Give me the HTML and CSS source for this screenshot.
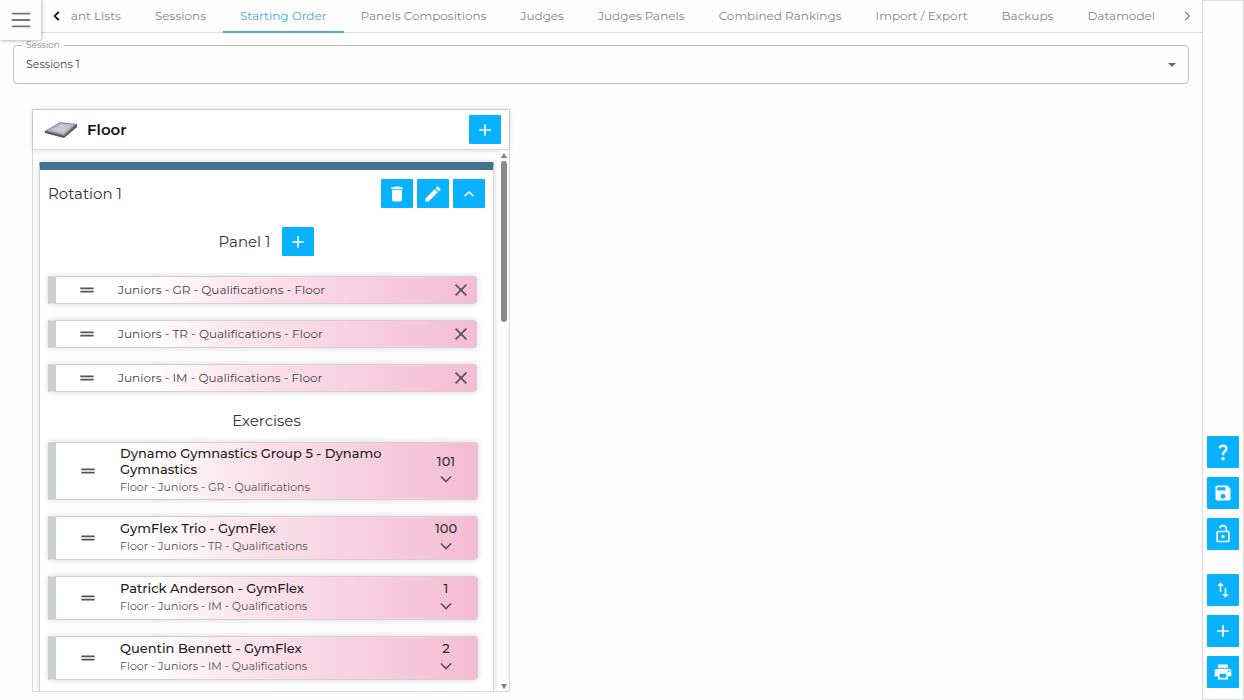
FILE: index.html
```html
<!DOCTYPE html>
<html lang="en">
	<head>
		<meta charset="utf-8">
		<title>Starting Order</title>
		<link rel="stylesheet" href="styles.css">
	</head>
	<body>
		<button class="menuButton" aria-label="Menu">
			<svg viewBox="0 0 24 24"><path d="M2 5h20M2 12h20M2 19h20"/></svg>
		</button>
		<main class="page">
			<nav class="tabBar">
				<button class="tabArrow prev" aria-label="Previous tabs"><svg viewBox="0 0 24 24"><path d="M15 5l-7 7 7 7"/></svg></button>
				<div class="tabs">
					<a class="tab" href="#">Participant Lists</a>
					<a class="tab" href="#">Sessions</a>
					<a class="tab active" href="#">Starting Order</a>
					<a class="tab" href="#">Panels Compositions</a>
					<a class="tab" href="#">Judges</a>
					<a class="tab" href="#">Judges Panels</a>
					<a class="tab" href="#">Combined Rankings</a>
					<a class="tab" href="#">Import / Export</a>
					<a class="tab" href="#">Backups</a>
					<a class="tab" href="#">Datamodel</a>
				</div>
				<button class="tabArrow" aria-label="Next tabs"><svg viewBox="0 0 24 24"><path d="M9 5l7 7-7 7"/></svg></button>
			</nav>

			<fieldset class="sessionField">
				<legend><label for="session">Session</label></legend>
				<select id="session">
					<option>Sessions 1</option>
				</select>
				<svg class="caret" viewBox="0 0 10 5"><path d="M0 0h10L5 5z"/></svg>
			</fieldset>

			<section class="apparatus">
				<header class="apparatusHeader">
					<svg class="floorIcon" viewBox="0 0 32 16">
						<path d="M0 9v2l19 5 13-11V2z" fill="#55565e"/>
						<path d="M0 9L15 0l17 2-13 12z" fill="#8b8d99"/>
						<path d="M3 8.600L15.500 1.300l13.500 1.500-10.500 9.500z" fill="#c6c9da"/>
						<path d="M5 8.400L16 2.200l11 1.200-9 7.800z" fill="none" stroke="#9a9dad" stroke-width=".7" stroke-dasharray="2 1"/>
					</svg>
					<h2>Floor</h2>
					<button class="iconButton" aria-label="Add rotation"><svg viewBox="0 0 24 24"><path d="M19 13h-6v6h-2v-6H5v-2h6V5h2v6h6z"/></svg></button>
				</header>
				<div class="apparatusBody">
					<div class="scrollArea">
						<div class="rotation">
							<div class="rotationHeader">
								<h3>Rotation 1</h3>
								<button class="iconButton" aria-label="Delete"><svg viewBox="0 0 24 24"><path d="M19 4h-3.500l-1-1h-5l-1 1H5v2h14M6 19a2 2 0 0 0 2 2h8a2 2 0 0 0 2-2V7H6z"/></svg></button>
								<button class="iconButton" aria-label="Edit"><svg viewBox="0 0 24 24"><path d="M20.710 7.040c.39-.39.39-1.040 0-1.410l-2.340-2.340c-.37-.39-1.020-.39-1.410 0l-1.840 1.830 3.750 3.750M3 17.250V21h3.750L17.810 9.930l-3.750-3.750z"/></svg></button>
								<button class="iconButton" aria-label="Collapse"><svg viewBox="0 0 24 24"><path d="M7.410 15.410L12 10.830l4.590 4.580L18 14l-6-6-6 6z"/></svg></button>
							</div>
							<div class="panelHeader">
								<h3>Panel 1</h3>
								<button class="iconButton" aria-label="Add phase"><svg viewBox="0 0 24 24"><path d="M19 13h-6v6h-2v-6H5v-2h6V5h2v6h6z"/></svg></button>
							</div>
							<ul class="phases">
								<li class="phase">
									<svg class="handle" viewBox="0 0 24 24"><path d="M20 9H4v2h16zM4 15h16v-2H4z"/></svg>
									<span class="phaseName">Juniors - GR - Qualifications - Floor</span>
									<button class="closeButton" aria-label="Remove"><svg viewBox="0 0 24 24"><path d="M5.500 5.500l13 13M18.500 5.500l-13 13"/></svg></button>
								</li>
								<li class="phase">
									<svg class="handle" viewBox="0 0 24 24"><path d="M20 9H4v2h16zM4 15h16v-2H4z"/></svg>
									<span class="phaseName">Juniors - TR - Qualifications - Floor</span>
									<button class="closeButton" aria-label="Remove"><svg viewBox="0 0 24 24"><path d="M5.500 5.500l13 13M18.500 5.500l-13 13"/></svg></button>
								</li>
								<li class="phase">
									<svg class="handle" viewBox="0 0 24 24"><path d="M20 9H4v2h16zM4 15h16v-2H4z"/></svg>
									<span class="phaseName">Juniors - IM - Qualifications - Floor</span>
									<button class="closeButton" aria-label="Remove"><svg viewBox="0 0 24 24"><path d="M5.500 5.500l13 13M18.500 5.500l-13 13"/></svg></button>
								</li>
							</ul>
							<h3 class="exercisesTitle">Exercises</h3>
							<ul class="exercises">
								<li class="exercise">
									<svg class="handle" viewBox="0 0 24 24"><path d="M20 9H4v2h16zM4 15h16v-2H4z"/></svg>
									<div class="exerciseText">
										<div class="exerciseName">Dynamo Gymnastics Group 5 - Dynamo Gymnastics</div>
										<div class="exerciseInfo">Floor - Juniors - GR - Qualifications</div>
									</div>
									<div class="exerciseSide">
										<span>101</span>
										<button aria-label="Expand"><svg viewBox="0 0 24 24"><path d="M6 9l6 6 6-6"/></svg></button>
									</div>
								</li>
								<li class="exercise">
									<svg class="handle" viewBox="0 0 24 24"><path d="M20 9H4v2h16zM4 15h16v-2H4z"/></svg>
									<div class="exerciseText">
										<div class="exerciseName">GymFlex Trio - GymFlex</div>
										<div class="exerciseInfo">Floor - Juniors - TR - Qualifications</div>
									</div>
									<div class="exerciseSide">
										<span>100</span>
										<button aria-label="Expand"><svg viewBox="0 0 24 24"><path d="M6 9l6 6 6-6"/></svg></button>
									</div>
								</li>
								<li class="exercise">
									<svg class="handle" viewBox="0 0 24 24"><path d="M20 9H4v2h16zM4 15h16v-2H4z"/></svg>
									<div class="exerciseText">
										<div class="exerciseName">Patrick Anderson - GymFlex</div>
										<div class="exerciseInfo">Floor - Juniors - IM - Qualifications</div>
									</div>
									<div class="exerciseSide">
										<span>1</span>
										<button aria-label="Expand"><svg viewBox="0 0 24 24"><path d="M6 9l6 6 6-6"/></svg></button>
									</div>
								</li>
								<li class="exercise">
									<svg class="handle" viewBox="0 0 24 24"><path d="M20 9H4v2h16zM4 15h16v-2H4z"/></svg>
									<div class="exerciseText">
										<div class="exerciseName">Quentin Bennett - GymFlex</div>
										<div class="exerciseInfo">Floor - Juniors - IM - Qualifications</div>
									</div>
									<div class="exerciseSide">
										<span>2</span>
										<button aria-label="Expand"><svg viewBox="0 0 24 24"><path d="M6 9l6 6 6-6"/></svg></button>
									</div>
								</li>
							</ul>
						</div>
					</div>
					<div class="scrollbar" aria-hidden="true">
						<svg viewBox="0 0 6 5"><path d="M3 0l3 5H0z"/></svg>
						<div class="track"><div class="thumb"></div></div>
						<svg viewBox="0 0 6 5"><path d="M0 0h6L3 5z"/></svg>
					</div>
				</div>
			</section>
		</main>

		<aside class="toolbar">
			<div class="toolGroup">
				<button class="iconButton tool" aria-label="Help"><svg viewBox="0 0 24 24"><path d="M11.070 12.850c.77-1.390 2.250-2.210 3.110-3.440.91-1.290.4-3.700-2.180-3.700-1.690 0-2.520 1.280-2.870 2.340L6.540 6.960C7.250 4.830 9.180 3 11.990 3c2.350 0 3.960 1.070 4.780 2.410.7 1.150 1.110 3.300.03 4.900-1.200 1.770-2.350 2.310-2.970 3.450-.25.46-.35.76-.35 2.240h-2.890c-.01-.78-.13-2.050.48-3.150zM14 20c0 1.100-.9 2-2 2s-2-.9-2-2 .9-2 2-2 2 .9 2 2z"/></svg></button>
				<button class="iconButton tool" aria-label="Save"><svg viewBox="0 0 24 24"><path d="M17 3H5c-1.110 0-2 .9-2 2v14c0 1.100.89 2 2 2h14c1.100 0 2-.9 2-2V7l-4-4zm-5 16c-1.660 0-3-1.340-3-3s1.340-3 3-3 3 1.340 3 3-1.340 3-3 3zm3-10H5V5h10v4z"/></svg></button>
				<button class="iconButton tool" aria-label="Unlock"><svg viewBox="0 0 24 24"><path d="M18 8h-1V6c0-2.760-2.240-5-5-5-2.280 0-4.270 1.540-4.840 3.750l1.940.5C9.440 3.930 10.630 3 12 3c1.650 0 3 1.350 3 3v2H6c-1.100 0-2 .9-2 2v10c0 1.100.9 2 2 2h12c1.100 0 2-.9 2-2V10c0-1.100-.9-2-2-2zm0 12H6V10h12v10zM12 17c1.100 0 2-.9 2-2s-.9-2-2-2-2 .9-2 2 .9 2 2 2z"/></svg></button>
			</div>
			<div class="toolGroup">
				<button class="iconButton tool" aria-label="Reorder"><svg viewBox="0 0 24 24"><path d="M16 17.010V10h-2v7.010h-3L15 21l4-3.990h-3zM9 3L5 6.990h3V14h2V6.990h3L9 3z"/></svg></button>
				<button class="iconButton tool" aria-label="Add"><svg viewBox="0 0 24 24"><path d="M19 13h-6v6h-2v-6H5v-2h6V5h2v6h6z"/></svg></button>
				<button class="iconButton tool" aria-label="Print"><svg viewBox="0 0 24 24"><path d="M19 8H5c-1.660 0-3 1.340-3 3v6h4v4h12v-4h4v-6c0-1.660-1.340-3-3-3zm-3 11H8v-5h8v5zm3-7c-.55 0-1-.45-1-1s.45-1 1-1 1 .45 1 1-.45 1-1 1zm-1-9H6v4h12V3z"/></svg></button>
			</div>
		</aside>
	</body>
</html>
```

FILE: styles.css
```css
*
	{
		box-sizing: border-box;
	}
body
	{
		display: flex;
		height: 100vh;
		margin: 0;
		font-family: Montserrat, Inter, sans-serif;
		font-size: 12px;
		color: #333;
		background-color: #fefefe;
	}
button
	{
		display: flex;
		align-items: center;
		justify-content: center;
		padding: 0;
		border: 0;
		background: none;
		font: inherit;
		cursor: pointer;
	}
h2, h3, ul
	{
		margin: 0;
		padding: 0;
		list-style: none;
	}
h3
	{
		font-size: 15px;
		font-weight: 400;
		line-height: 18px;
	}
.page
	{
		display: flex;
		flex-direction: column;
		flex: 1;
		min-width: 0;
		padding-bottom: 8px;
	}
.menuButton
	{
		position: absolute;
		top: 0;
		left: 0;
		z-index: 2;
		width: 41px;
		height: 40px;
		background-color: #fefefe;
		border-radius: 0 0 2px 0;
		box-shadow: 0 0 4px rgba(0,0,0,.4);
	}
.menuButton svg
	{
		width: 22px;
		fill: none;
		stroke: #777;
		stroke-width: 2;
	}

/* tabs */
.tabBar
	{
		display: flex;
		flex: none;
		height: 33px;
		padding-left: 43px;
		border-bottom: 1px solid #d9dce0;
	}
.tabs
	{
		display: flex;
		flex: 1;
		justify-content: flex-end;
		min-width: 0;
		margin-bottom: -1px;
		overflow: hidden;
	}
.tab
	{
		flex: none;
		padding: 0 17px;
		border-bottom: 2px solid transparent;
		line-height: 32px;
		color: #858585;
		text-decoration: none;
		white-space: nowrap;
	}
.tab.active
	{
		color: #45a9e0;
		border-color: #4dabd8;
	}
.tabArrow
	{
		width: 28px;
	}
.tabArrow:last-child
	{
		width: 30px;
	}
.tabArrow svg
	{
		width: 14px;
		fill: none;
		stroke: #777;
		stroke-width: 2;
	}
.tabArrow.prev svg
	{
		stroke: #000;
		stroke-width: 3;
	}

/* session selector */
.sessionField
	{
		display: flex;
		align-items: center;
		flex: none;
		margin: 7px 13px 0;
		padding: 0;
		border: 1px solid #bbbdbf;
		border-radius: 4px;
	}
.sessionField legend
	{
		margin-left: 8px;
		padding: 0 4px;
		font-size: 9px;
		line-height: 10px;
		color: #888;
	}
.sessionField select
	{
		flex: 1;
		height: 33px;
		padding: 0 12px 5px;
		border: 0;
		background: none;
		appearance: none;
		font: inherit;
		font-size: 11px;
		color: #444;
	}
.caret
	{
		width: 8px;
		margin: 0 12px 4px 0;
		fill: #666;
	}

/* apparatus */
.apparatus
	{
		display: flex;
		flex-direction: column;
		flex: 1;
		width: calc(100% - 64px);
		max-width: 478px;
		min-height: 0;
		margin: 25px 32px 0;
		border: 1px solid #d6d9dd;
	}
.apparatusHeader
	{
		display: flex;
		align-items: center;
		flex: none;
		height: 40px;
		padding: 0 8px 0 12px;
		background-color: #fff;
		border-bottom: 1px solid #d6d9dd;
		box-shadow: 0 0 6px rgba(0,0,0,.16);
	}
.apparatusHeader h2
	{
		flex: 1;
		font-size: 15px;
		font-weight: 600;
		line-height: 18px;
		color: #111;
	}
.floorIcon
	{
		width: 32px;
		margin-right: 10px;
	}
.apparatusBody
	{
		display: flex;
		flex: 1;
		min-height: 0;
	}
.scrollArea
	{
		display: flex;
		flex: 1;
		overflow: hidden;
		padding: 12px 6px 0;
	}
.rotation
	{
		flex: 1;
		padding: 0 8px;
		background-color: #fff;
		border: 1px solid #cdd4dc;
		border-top: 8px solid #41718f;
		border-bottom: 0;
		border-radius: 2px 2px 0 0;
		box-shadow: 0 0 6px rgba(0,0,0,.14);
	}
.rotationHeader
	{
		display: flex;
		align-items: center;
		gap: 4px;
		margin-top: 9px;
	}
.rotationHeader h3
	{
		flex: 1;
	}
.panelHeader
	{
		display: flex;
		align-items: center;
		justify-content: center;
		gap: 12px;
		margin: 19px 0 20px;
	}
.iconButton
	{
		width: 32px;
		height: 29px;
		border-radius: 1px;
		background-color: #08b2ff;
	}
.iconButton svg
	{
		width: 20px;
		fill: #fff;
	}

/* phases and exercises */
.phases, .exercises
	{
		display: flex;
		flex-direction: column;
		gap: 16px;
		margin-right: 8px;
	}
.exercises
	{
		margin-right: 7px;
	}
.phase, .exercise
	{
		display: flex;
		align-items: center;
		flex: none;
		border: 1px solid #d6d0d5;
		border-left: 8px solid #c9cfcd;
		border-radius: 0 3px 3px 0;
		background: linear-gradient(90deg, #fff 22%, #fbe4ec 45%, #f4bcd2) padding-box;
		box-shadow: 0 0 6px rgba(0,0,0,.16);
	}
.phase
	{
		height: 28px;
	}
.phaseName
	{
		flex: 1;
		line-height: 16px;
		color: #444;
	}
.handle
	{
		flex: none;
		width: 20px;
		margin: 0 21px;
		fill: #555;
	}
.exercise .handle
	{
		margin: 0 22px;
	}
.closeButton
	{
		width: 30px;
		height: 26px;
	}
.closeButton svg
	{
		width: 20px;
		stroke: #555;
		stroke-width: 2;
	}
.exercisesTitle
	{
		margin: 20px 0 12px;
		text-align: center;
	}
.exercise
	{
		min-height: 44px;
		padding: 2px 0;
	}
.exerciseText
	{
		flex: 1;
	}
.exerciseName
	{
		font-size: 13px;
		font-weight: 500;
		line-height: 16px;
		color: #222;
	}
.exerciseInfo
	{
		font-size: 11px;
		line-height: 20px;
		color: #555;
	}
.exerciseSide
	{
		display: flex;
		flex-direction: column;
		align-items: center;
		width: 62px;
		font-size: 13px;
		font-weight: 500;
		line-height: 16px;
	}
.exerciseSide svg
	{
		width: 20px;
		height: 20px;
		fill: none;
		stroke: #555;
		stroke-width: 2;
	}

/* drawn scrollbar */
.scrollbar
	{
		display: flex;
		flex-direction: column;
		align-items: center;
		width: 9px;
		padding: 3px 1px 2px 0;
		background-color: #fcfcfc;
	}
.scrollbar svg
	{
		width: 6px;
		fill: #808080;
	}
.track
	{
		flex: 1;
		padding: 3px 0;
	}
.thumb
	{
		width: 6px;
		height: 31%;
		border-radius: 3px;
		background-color: #8a8a8a;
	}

/* right toolbar */
.toolbar
	{
		display: flex;
		flex-direction: column;
		justify-content: flex-end;
		gap: 24px;
		flex: none;
		padding: 0 4px 11px;
		border: 1px solid #d9dce0;
	}
.toolGroup
	{
		display: flex;
		flex-direction: column;
		gap: 9px;
	}
.tool
	{
		height: 32px;
	}
```
